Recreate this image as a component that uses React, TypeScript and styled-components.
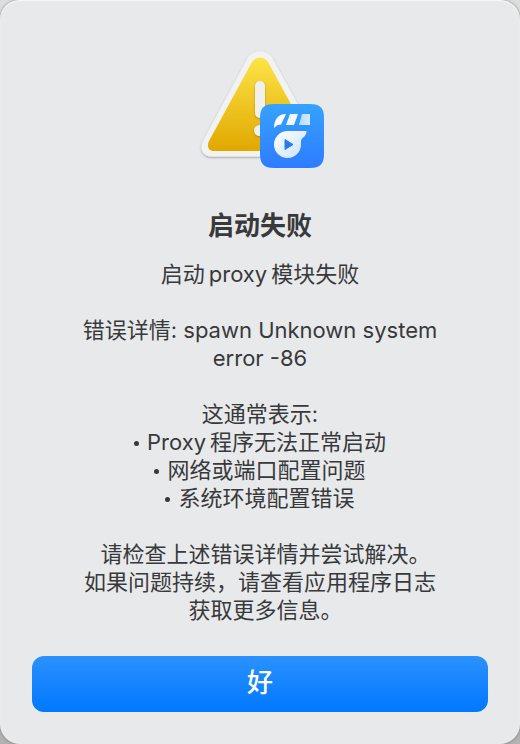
import React from "react";
import styled, { createGlobalStyle } from "styled-components";

const GlobalStyle = createGlobalStyle`
  * { box-sizing: border-box; }
  html, body { margin: 0; }
  body {
    background: linear-gradient(#dcdddd, #b2b2b2);
    font-family: Inter, "Noto Sans CJK SC", sans-serif;
    color: #38393b;
  }
`;

const Dialog = styled.main`
  display: flex;
  flex-direction: column;
  align-items: center;
  min-height: 100vh;
  padding: 48px 32px 32px;
  border-radius: 20px;
  background: #e8e9eb;
  box-shadow: inset 0 1px 1px #f8f8f8, 0 0 3px rgba(0, 0, 0, 0.4);
`;

const AlertArt = styled.svg`
  display: block;
  width: 128px;
  height: 128px;
`;

const Title = styled.h1`
  margin: 34px 0 18px;
  font-size: 26px;
  line-height: 32px;
  font-weight: 700;
`;

const Message = styled.div`
  display: flex;
  flex-direction: column;
  gap: 28px;
  max-width: 368px;
  font-size: 22px;
  line-height: 28px;
  text-align: center;
`;

const Paragraph = styled.p`
  margin: 0;
`;

const Causes = styled.ul`
  margin: 0;
  padding: 0;
  list-style: none;
`;

const Cause = styled.li`
  &::before {
    content: "";
    display: inline-block;
    width: 5px;
    height: 5px;
    margin: 0 8px 4px 0;
    border-radius: 50%;
    background: currentColor;
  }
`;

const Latin = styled.span<{ $lead?: boolean }>`
  margin-left: ${(p) => (p.$lead ? "0" : "4px")};
  margin-right: 4px;
`;

const Clause = styled.span`
  font-feature-settings: "halt";
`;

const ConfirmButton = styled.button`
  width: 100%;
  height: 56px;
  margin-top: auto;
  padding: 0 0 2px;
  border: 0;
  border-radius: 12px;
  background: linear-gradient(#2b91ff, #0078ff);
  color: #fff;
  font-family: inherit;
  font-size: 26px;
  font-weight: 500;
  line-height: 32px;
`;

function WarningIcon() {
  return (
    <AlertArt viewBox="196 48 128 128" role="img" aria-label="警告">
      <defs>
        <linearGradient id="yellow" x1="0" y1="0" x2="0" y2="1">
          <stop offset="0" stopColor="#fde447" />
          <stop offset="1" stopColor="#e0a800" />
        </linearGradient>
        <linearGradient id="blue" x1="0" y1="0" x2="0" y2="1">
          <stop offset="0" stopColor="#35a2ff" />
          <stop offset="1" stopColor="#2e7cff" />
        </linearGradient>
        <linearGradient id="white" x1="0" y1="0" x2="1" y2="1">
          <stop offset="0" stopColor="#ffffff" />
          <stop offset="1" stopColor="#c5e2ff" />
        </linearGradient>
        <linearGradient id="blade" x1="0" y1="0" x2="1" y2="0">
          <stop offset="0" stopColor="#b4daff" />
          <stop offset="1" stopColor="#d6ebff" />
        </linearGradient>
        <filter id="soft" x="-20%" y="-20%" width="140%" height="140%">
          <feDropShadow dx="0" dy="1" stdDeviation="1" floodColor="#000" floodOpacity="0.35" />
        </filter>
        <filter id="mark" x="-60%" y="-20%" width="220%" height="140%">
          <feDropShadow dx="0" dy="1" stdDeviation="1" floodColor="#805a00" floodOpacity="0.5" />
        </filter>
      </defs>
      <path
        d="M247.5 58C253 49 267 49 272.5 58L317 139C322 149 317 156.500 308 156.500H212C203 156.500 198.500 149 203.500 140Z"
        fill="#f2f2f2"
        filter="url(#soft)"
      />
      <path
        d="M252 62C256 56 264 56 268 62L311 141C314 147 311 151 306 151H214C208.500 151 206.500 146 209 141Z"
        fill="url(#yellow)"
      />
      <g fill="#f1f0ed" filter="url(#mark)">
        <rect x="255" y="81" width="10" height="37" rx="5" />
        <ellipse cx="260" cy="130.500" rx="6" ry="5.500" />
      </g>
      <path
        d="M274 104H310C320 104 324 108 324 118V154C324 164 320 168 310 168H274C264 168 260 164 260 154V118C260 108 264 104 274 104Z"
        fill="url(#blue)"
      />
      <path d="M286 114L281 124.500C278.500 124.500 276 125.500 274 128C274 120 278 114 286 114Z" fill="#fff" />
      <path d="M290 114H298L294 125H286Z" fill="#eff7ff" />
      <path d="M302 114H310V125H299Z" fill="url(#blade)" />
      <path
        d="M287.500 131H306.500C306.500 134 305 136.500 302.500 138C300.500 139.500 301 142 301 144.500A13.500 13.500 0 1 1 287.500 131Z"
        fill="url(#white)"
      />
      <path d="M285 139.500V149.500L293 144.500Z" fill="#257eec" stroke="#257eec" strokeWidth="1" strokeLinejoin="round" />
    </AlertArt>
  );
}

export default function App() {
  return (
    <>
      <GlobalStyle />
      <Dialog role="alertdialog" aria-labelledby="title" aria-describedby="message" lang="zh-CN">
        <WarningIcon />
        <Title id="title">启动失败</Title>
        <Message id="message">
          <Paragraph>
            启动<Latin>proxy</Latin>模块失败
          </Paragraph>
          <Paragraph>错误详情: spawn Unknown system error -86</Paragraph>
          <div>
            <Paragraph>这通常表示:</Paragraph>
            <Causes>
              <Cause>
                <Latin $lead>Proxy</Latin>程序无法正常启动
              </Cause>
              <Cause>网络或端口配置问题</Cause>
              <Cause>系统环境配置错误</Cause>
            </Causes>
          </div>
          <div>
            <Paragraph>
              <Clause>请检查上述错误详情并尝试解决。</Clause>
            </Paragraph>
            <Paragraph>
              如果问题持续，请查看应用程序日志<Clause>获取更多信息。</Clause>
            </Paragraph>
          </div>
        </Message>
        <ConfirmButton type="button">好</ConfirmButton>
      </Dialog>
    </>
  );
}
